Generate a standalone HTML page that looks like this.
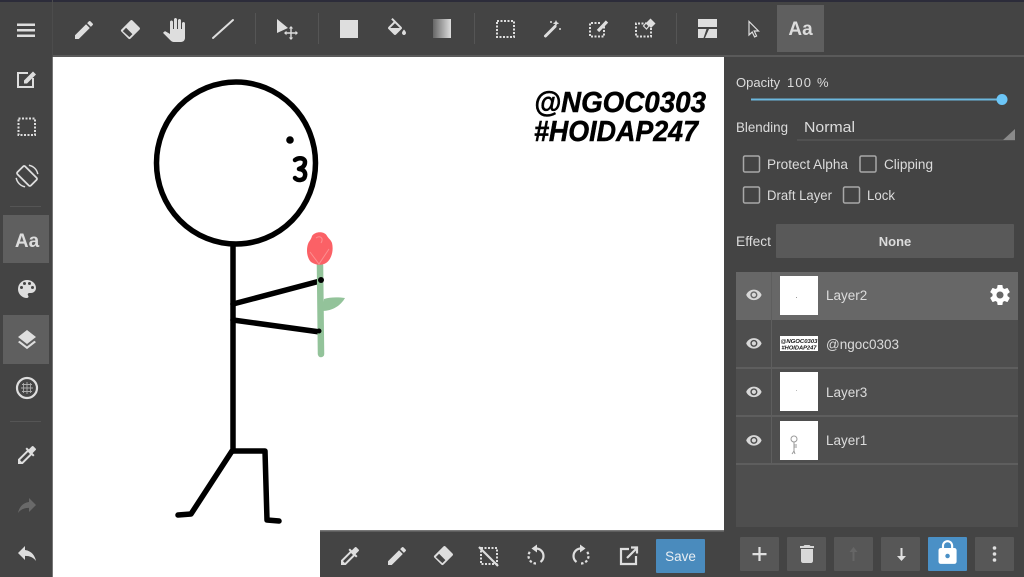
<!DOCTYPE html>
<html><head><meta charset="utf-8"><style>
html,body{margin:0;padding:0;background:#444;width:1024px;height:577px;overflow:hidden}
svg{display:block;position:absolute;left:0;top:0;filter:blur(.35px)}
text{font-family:"Liberation Sans",sans-serif;fill:#dcdcdc}
</style></head><body>
<svg width="1024" height="577" viewBox="0 0 1024 577" xmlns="http://www.w3.org/2000/svg">
<defs>
<linearGradient id="gr" x1="0" x2="1" y1="0" y2="0"><stop offset="0" stop-color="#666"/><stop offset="1" stop-color="#ddd"/></linearGradient>
<path id="pencil" d="M3 17.25V21h3.75L17.81 9.94l-3.75-3.75L3 17.25zM20.71 7.04a1 1 0 000-1.41l-2.34-2.34a1 1 0 00-1.41 0l-1.83 1.83 3.75 3.75 1.83-1.83z"/>
<g id="eraser"><path d="M14.5 2.500l7 7a1.500 1.500 0 010 2.100l-9 9a1.500 1.500 0 01-2.100 0l-7-7a1.500 1.500 0 010-2.100l9-9a1.500 1.500 0 012.100 0z"/><path d="M4.800 13.100l6.600 6 3-3-6.300-6.300z" fill="#444"/></g>
<path id="eye" d="M12 4.5C7 4.5 2.73 7.61 1 12c1.73 4.39 6 7.5 11 7.5s9.27-3.11 11-7.5c-1.73-4.39-6-7.5-11-7.5zM12 17c-2.76 0-5-2.24-5-5s2.24-5 5-5 5 2.24 5 5-2.24 5-5 5zm0-8c-1.66 0-3 1.34-3 3s1.34 3 3 3 3-1.34 3-3-1.34-3-3-3z"/>
<path id="drop" d="M20.71 5.63l-2.34-2.34c-.39-.39-1.02-.39-1.41 0l-3.12 3.12-1.93-1.91-1.41 1.41 1.42 1.42L3 16.25V21h4.75l8.92-8.92 1.42 1.42 1.41-1.41-1.92-1.92 3.12-3.12c.4-.4.4-1.03.01-1.42zM6.92 19L5 17.08l8.06-8.06 1.92 1.92L6.92 19z"/>
</defs>

<!-- base -->
<rect width="1024" height="577" fill="#444"/>
<rect width="1024" height="2" fill="#2c2c3a"/>
<rect x="53" y="55" width="971" height="2" fill="#5a5a5a"/>
<rect x="52" y="0" width="1" height="57" fill="#4c4c4c"/>
<rect x="53" y="57" width="671" height="520" fill="#fff"/>
<rect x="52" y="57" width="1" height="520" fill="#777"/>

<!-- drawing -->
<g fill="none" stroke="#000" stroke-linecap="round" stroke-linejoin="round">
<ellipse cx="236" cy="163" rx="79.5" ry="81" stroke-width="5.5"/>
<path d="M233 245V451" stroke-width="5.5"/>
<path d="M178 515L191 514L232 451H265L267 520L279 521" stroke-width="5.5"/>
<path d="M233 304L320 281M233 320L320 332" stroke-width="5.5"/>
<path d="M295 160C299 157 305 158 305 162C305 167 301 168 299 169C303 169 306 172 305 176C304 181 297 181 295 178" stroke-width="4.500"/>
</g>
<circle cx="290" cy="140" r="3.800" fill="#000"/>
<path d="M320 265L321 354" stroke="#93c39a" stroke-width="6.500" stroke-linecap="round"/>
<circle cx="321" cy="280" r="3" fill="#000"/><circle cx="319" cy="331" r="2.500" fill="#000"/>
<path d="M322 311L324 299C330 297 338 297 345 298C341 305 333 311 322 311Z" fill="#93c39a"/>
<path d="M312 236C315 231 325 231 327 236C329 239 331 240 332 243C334 251 331 260 326 263C321 266 315 265 311 262C307 258 306 250 308 244C309 241 311 240 312 236Z" fill="#fb6166"/>
<path d="M316 238C320 235 324 238 321 243M310 252L319 264L329 249" fill="none" stroke="#fc8f90" stroke-width="1"/>

<text x="534" y="112" font-size="29" font-weight="700" font-style="italic" textLength="172" lengthAdjust="spacingAndGlyphs" stroke="#000" stroke-width=".5" style="fill:#000">@NGOC0303</text>
<text x="534" y="141" font-size="29" font-weight="700" font-style="italic" textLength="164" lengthAdjust="spacingAndGlyphs" stroke="#000" stroke-width=".5" style="fill:#000">#HOIDAP247</text>

<!-- top toolbar -->
<g fill="#dedede">
<path d="M17 23.500h18v2.500H17zM17 29h18v2.500H17zM17 34.500h18v2.500H17z"/>
<use href="#pencil" transform="translate(72 18)"/>
<use href="#eraser" transform="translate(118 18)"/>
<path transform="translate(162 18)" d="M23 5.500V20c0 2.200-1.800 4-4 4h-7.300c-1.080 0-2.100-.43-2.850-1.190L1 14.830s1.260-1.230 1.300-1.250c.22-.19.49-.29.79-.29.22 0 .42.06.6.16.04.01 4.310 2.460 4.310 2.460V4c0-.83.67-1.500 1.500-1.500S11 3.170 11 4v7h1V1.500c0-.83.67-1.500 1.500-1.500S15 .67 15 1.500V11h1V2.500c0-.83.67-1.500 1.500-1.500s1.500.67 1.500 1.500V11h1V5.500c0-.83.67-1.500 1.500-1.500s1.500.67 1.500 1.500z"/>
<path d="M277 19L288 28L277 33Z"/>
<path d="M291 28v10M286 33h10" stroke="#dedede" stroke-width="1.400"/>
<path d="M291 26l-2.200 2.500h4.400zM291 40l-2.200-2.500h4.400zM284 33l2.500-2.200v4.400zM298 33l-2.500-2.200v4.400z"/>
<rect x="340" y="20" width="18" height="18"/>
<path transform="translate(385 18)" d="M16.56 8.94L7.62 0 6.21 1.41l2.38 2.38-5.15 5.15c-.59.59-.59 1.54 0 2.12l5.5 5.5c.29.29.68.44 1.06.44s.77-.15 1.06-.44l5.5-5.5c.59-.58.59-1.53 0-2.12zM5.21 10L10 5.21 14.79 10H5.21zM19 11.500s-2 2.170-2 3.500c0 1.100.9 2 2 2s2-.9 2-2c0-1.330-2-3.500-2-3.500z"/>
<rect x="433" y="19" width="18" height="19" fill="url(#gr)"/>
<path d="M556 20l1 2.200 2.200 1-2.200 1-1 2.200-1-2.200-2.200-1 2.200-1z"/>
<circle cx="551" cy="22" r="1"/><circle cx="560" cy="29" r="1"/>
<path d="M698 19h19v8h-19zM698 29h8.500l-3 9h-5.500zM709 29h8v9h-12z"/>
</g>
<path d="M545.500 36L555 26.500" stroke="#dedede" stroke-width="3" stroke-linecap="round"/>
<path d="M749 21.500v13.500l3.200-3 2.400 5 2-1-2.400-5h4.300z" fill="none" stroke="#dedede" stroke-width="1.200"/>
<g fill="none" stroke="#dedede">
<path d="M213 38L233 20" stroke-width="2" stroke-linecap="round"/>
<rect x="497" y="21" width="17" height="16" stroke-width="2" stroke-dasharray="2 1.500"/>
<path d="M600 23h-10v13.500h14v-10" stroke-width="2" stroke-dasharray="2 1.500"/>
<path d="M598 31L607 21.500" stroke-width="3.200"/>
<path d="M647 23.500h-11v13h15v-9" stroke-width="2" stroke-dasharray="2 1.500"/>
</g>
<path d="M650.500 18.500L655.500 23.500L651 28L646 23Z" fill="#dedede"/>
<path d="M646 23L649 26L646.500 29L643.500 26Z" fill="#444" stroke="#dedede" stroke-width="1.200"/>
<rect x="255" y="13" width="1" height="31" fill="#555"/>
<rect x="318" y="13" width="1" height="31" fill="#555"/>
<rect x="474" y="13" width="1" height="31" fill="#555"/>
<rect x="676" y="13" width="1" height="31" fill="#555"/>
<rect x="777" y="5" width="47" height="47" fill="#5f5f5f"/>
<text x="800.500" y="35" font-size="19" font-weight="700" text-anchor="middle">Aa</text>

<!-- left bar -->
<rect x="3" y="215" width="46" height="48" fill="#5f5f5f"/>
<rect x="3" y="315" width="46" height="49" fill="#5f5f5f"/>
<rect x="10" y="206" width="31" height="1" fill="#555"/>
<rect x="10" y="421" width="31" height="1" fill="#555"/>
<g fill="none" stroke="#dedede">
<path d="M28 73h-10v14h15v-9" stroke-width="2"/>
<rect x="18.500" y="118.500" width="16.500" height="16.500" stroke-width="2" stroke-dasharray="2 1.500"/>
<rect x="-5.500" y="-9.500" width="11" height="19" rx="1.500" transform="translate(27 176) rotate(-45)" stroke-width="1.800"/>
<path d="M28.900 165.200A11 11 0 0 1 37.800 174.100M25.100 186.800A11 11 0 0 1 16.200 177.900" stroke-width="1.500"/>
<circle cx="27" cy="388" r="10" stroke-width="2.200"/>
<path d="M21 388h12M27 382v12M23.500 383v10M30.500 383v10M22 384.500h10M22 391.500h10" stroke-width=".9" stroke="#aaa"/>
</g>
<g fill="#dedede">
<path d="M24 80.500v3h3l9-9-3-3z"/>
<text x="27" y="247" font-size="19" font-weight="700" text-anchor="middle">Aa</text>
<path transform="translate(15 277)" d="M12 3a9 9 0 000 18c.83 0 1.500-.67 1.500-1.500 0-.39-.15-.74-.39-1.010-.23-.26-.38-.61-.38-.99 0-.83.67-1.500 1.500-1.500H16c2.760 0 5-2.240 5-5 0-4.420-4.030-8-9-8zm-5.500 9a1.500 1.500 0 110-3 1.500 1.500 0 010 3zm3-4a1.500 1.500 0 110-3 1.500 1.500 0 010 3zm5 0a1.500 1.500 0 110-3 1.500 1.500 0 010 3zm3 4a1.500 1.500 0 110-3 1.500 1.500 0 010 3z"/>
<path transform="translate(15 328)" d="M11.990 18.540l-7.370-5.730L3 14.070l9 7 9-7-1.630-1.270-7.380 5.740zM12 16l7.360-5.730L21 9l-9-7-9 7 1.630 1.270L12 16z"/>
<use href="#drop" transform="translate(15 443)"/>
<path transform="translate(15 541)" d="M10 9V5l-7 7 7 7v-4.100c5 0 8.500 1.600 11 5.100-1-5-4-10-11-11z"/>
</g>
<path transform="translate(39 493) scale(-1 1)" d="M10 9V5l-7 7 7 7v-4.100c5 0 8.500 1.600 11 5.100-1-5-4-10-11-11z" fill="#696969"/>

<!-- bottom toolbar -->
<rect x="320" y="531" width="404" height="46" fill="#444"/>
<rect x="320" y="530" width="404" height="1.500" fill="#777"/>
<g fill="#dedede">
<use href="#drop" transform="translate(338 544)"/>
<use href="#pencil" transform="translate(385 544)"/>
<use href="#eraser" transform="translate(431 544)"/>
</g>
<g fill="none" stroke="#dedede">
<rect x="481" y="548" width="16" height="16" stroke-width="2" stroke-dasharray="2 1.500"/>
<path d="M479 547L498 566" stroke-width="2.200"/>
<path d="M536 548.500a7.500 7.500 0 017.500 7.500 7.500 7.500 0 01-3 6" stroke-width="2.200"/>
<path d="M536 563.500a7.500 7.500 0 01-7.500-7.500 7.500 7.500 0 012-5" stroke-width="2.200" stroke-dasharray="2.500 2"/>
<path d="M581 548.500a7.500 7.500 0 00-7.500 7.500 7.500 7.500 0 003 6" stroke-width="2.200"/>
<path d="M581 563.500a7.500 7.500 0 007.500-7.500 7.500 7.500 0 00-2-5" stroke-width="2.200" stroke-dasharray="2.500 2"/>
<path d="M629 549h-8v15h15v-8" stroke-width="2.200"/>
<path d="M627 558L637 548M631 547.500h6v6" stroke-width="2.200"/>
</g>
<path d="M537 544.500v8l-5.500-4zM580 544.500v8l5.500-4z" fill="#dedede"/>
<rect x="656" y="539" width="49" height="34" rx="1" fill="#4a8bbd"/>
<text x="680.500" y="561" font-size="13.500" text-anchor="middle" style="fill:#e8eef3">Save</text>

<!-- right panel -->
<text x="736" y="87" font-size="13">Opacity</text>
<text x="787" y="87" font-size="13" textLength="24">100</text>
<text x="817" y="87" font-size="13">%</text>
<rect x="751" y="98.500" width="250" height="2" fill="#6cb8de"/>
<circle cx="1002" cy="99.500" r="5.500" fill="#6cc6f7"/>
<text x="736" y="132" font-size="13.500" textLength="52" lengthAdjust="spacingAndGlyphs">Blending</text>
<text x="804" y="132" font-size="15" textLength="51" lengthAdjust="spacingAndGlyphs">Normal</text>
<rect x="797" y="139.500" width="218" height="1" fill="#5e5e5e"/>
<path d="M1015 129v11h-12z" fill="#8a8a8a"/>
<g fill="none" stroke="#a8a8a8" stroke-width="1.500">
<rect x="743.500" y="156" width="16" height="16" rx="1.500"/>
<rect x="860" y="156" width="16" height="16" rx="1.500"/>
<rect x="743.500" y="187" width="16" height="16" rx="1.500"/>
<rect x="843.500" y="187" width="16" height="16" rx="1.500"/>
</g>
<text x="767" y="169" font-size="13.500" textLength="81" lengthAdjust="spacingAndGlyphs">Protect Alpha</text>
<text x="884" y="169" font-size="13.500" textLength="49" lengthAdjust="spacingAndGlyphs">Clipping</text>
<text x="767" y="200" font-size="13.500" textLength="65" lengthAdjust="spacingAndGlyphs">Draft Layer</text>
<text x="867" y="200" font-size="13.500" textLength="28" lengthAdjust="spacingAndGlyphs">Lock</text>
<text x="736" y="246" font-size="13.500" textLength="35" lengthAdjust="spacingAndGlyphs">Effect</text>
<rect x="776" y="224" width="238" height="34" rx="1" fill="#595959"/>
<text x="895" y="246" font-size="13" font-weight="700" text-anchor="middle">None</text>

<!-- layers -->
<rect x="736" y="272" width="282" height="255" fill="#4e4e4e"/>
<rect x="736" y="272" width="282" height="48" fill="#676767"/>
<rect x="736" y="367" width="282" height="2" fill="#5e5e5e"/>
<rect x="736" y="415" width="282" height="2" fill="#5e5e5e"/>
<rect x="736" y="463" width="282" height="2" fill="#5e5e5e"/>
<rect x="771" y="272" width="1" height="193" fill="#5e5e5e"/>
<g fill="#d8d8d8">
<use href="#eye" transform="translate(745.500 286.500) scale(.7)"/>
<use href="#eye" transform="translate(745.500 335) scale(.7)"/>
<use href="#eye" transform="translate(745.500 383.500) scale(.7)"/>
<use href="#eye" transform="translate(745.500 432) scale(.7)"/>
</g>
<rect x="780" y="276" width="38" height="39" fill="#fff"/>
<rect x="780" y="336" width="38" height="15" fill="#fff"/>
<rect x="780" y="372" width="38" height="39" fill="#fff"/>
<rect x="780" y="421" width="38" height="39" fill="#fff"/>
<rect x="796" y="297" width="1" height="1" fill="#999"/>
<rect x="796" y="390" width="1" height="1" fill="#bbb"/>
<text x="799" y="343" font-size="5.500" font-weight="700" font-style="italic" text-anchor="middle" textLength="37" lengthAdjust="spacingAndGlyphs" style="fill:#111">@NGOC0303</text>
<text x="799" y="349.500" font-size="5.500" font-weight="700" font-style="italic" text-anchor="middle" textLength="35" lengthAdjust="spacingAndGlyphs" style="fill:#111">#HOIDAP247</text>
<g fill="none" stroke="#999" stroke-width="1">
<circle cx="794" cy="439" r="3"/><path d="M794 442v9M794 445h3M794 447h3M794 451l-2 3M794 451l1 3"/>
</g>
<text x="826" y="300" font-size="13.500">Layer2</text>
<text x="826" y="349" font-size="13.500">@ngoc0303</text>
<text x="826" y="397" font-size="13.500">Layer3</text>
<text x="826" y="445" font-size="13.500">Layer1</text>
<path fill="#fff" transform="translate(988 283)" d="M19.430 12.980c.04-.32.07-.64.07-.98s-.03-.66-.07-.98l2.110-1.650c.19-.15.24-.42.12-.64l-2-3.460c-.12-.22-.39-.3-.61-.22l-2.490 1c-.52-.4-1.080-.73-1.690-.98l-.38-2.650C14.460 2.180 14.250 2 14 2h-4c-.25 0-.46.18-.49.42l-.38 2.650c-.61.25-1.170.59-1.690.98l-2.490-1c-.23-.09-.49 0-.61.22l-2 3.460c-.13.22-.07.49.12.64l2.110 1.650c-.04.32-.07.65-.07.98s.03.66.07.98l-2.110 1.650c-.19.15-.24.42-.12.64l2 3.460c.12.22.39.3.61.22l2.490-1c.52.4 1.080.73 1.690.98l.38 2.650c.03.24.24.42.49.42h4c.25 0 .46-.18.49-.42l.38-2.650c.61-.25 1.170-.59 1.690-.98l2.490 1c.23.09.49 0 .61-.22l2-3.460c.12-.22.07-.49-.12-.64l-2.110-1.650zM12 15.500c-1.930 0-3.500-1.570-3.500-3.500s1.570-3.500 3.500-3.500 3.500 1.570 3.500 3.500-1.570 3.500-3.500 3.500z"/>

<!-- layer buttons -->
<rect x="740" y="537" width="39" height="34" rx="1" fill="#575757"/>
<rect x="787" y="537" width="39" height="34" rx="1" fill="#575757"/>
<rect x="834" y="537" width="39" height="34" rx="1" fill="#575757"/>
<rect x="881" y="537" width="39" height="34" rx="1" fill="#575757"/>
<rect x="928" y="537" width="39" height="34" rx="1" fill="#4a90c6"/>
<rect x="975" y="537" width="39" height="34" rx="1" fill="#575757"/>
<path d="M752.500 553h14v2.200h-14zM758.400 547h2.200v14h-2.200z" fill="#e0e0e0"/>
<path transform="translate(795 542)" d="M6 19c0 1.100.9 2 2 2h8c1.100 0 2-.9 2-2V7H6v12zM19 4h-3.500l-1-1h-5l-1 1H5v2h14V4z" fill="#d8d8d8"/>
<path d="M853.500 547l-4 5h3v9h2v-9h3z" fill="#666"/>
<path d="M901.500 561l-4.500-5h3.500v-8h2v8h3.500z" fill="#e0e0e0"/>
<path transform="translate(934 539) scale(1.130)" d="M18 8h-1V6c0-2.760-2.240-5-5-5S7 3.240 7 6v2H6c-1.100 0-2 .9-2 2v10c0 1.100.9 2 2 2h12c1.100 0 2-.9 2-2V10c0-1.100-.9-2-2-2zm-6 9c-1.100 0-2-.9-2-2s.9-2 2-2 2 .9 2 2-.9 2-2 2zm3.100-9H8.900V6c0-1.710 1.390-3.100 3.100-3.100 1.710 0 3.100 1.390 3.100 3.100v2z" fill="#fff"/>
<circle cx="994.500" cy="548" r="1.800" fill="#e0e0e0"/><circle cx="994.500" cy="554" r="1.800" fill="#e0e0e0"/><circle cx="994.500" cy="560" r="1.800" fill="#e0e0e0"/>
</svg>
</body></html>
